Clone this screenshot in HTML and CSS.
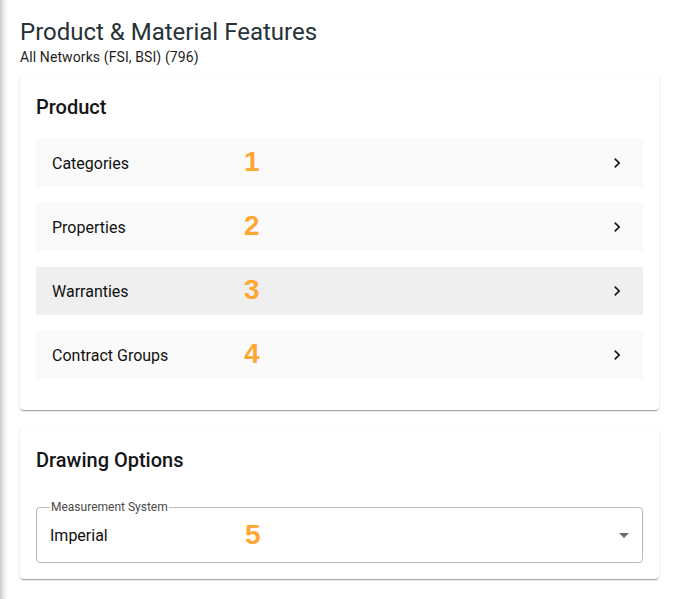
FILE: index.html
```html
<!DOCTYPE html>
<html lang="en">
<head>
<meta charset="utf-8">
<title>Product &amp; Material Features</title>
<link rel="stylesheet" href="styles.css">
</head>
<body>
<main class="page">
  <header class="page-head">
    <h1 class="page-title">Product &amp; Material Features</h1>
    <div class="page-sub">All Networks (FSI, BSI) (796)</div>
  </header>

  <section class="card">
    <h2 class="card-title">Product</h2>
    <ul class="list">
      <li class="row"><span class="row-label">Categories</span><span class="mark">1</span>
        <svg class="chev" viewBox="0 0 24 24"><path d="M10 6 8.59 7.41 13.17 12l-4.58 4.59L10 18l6-6z"/></svg></li>
      <li class="row"><span class="row-label">Properties</span><span class="mark">2</span>
        <svg class="chev" viewBox="0 0 24 24"><path d="M10 6 8.59 7.41 13.17 12l-4.58 4.59L10 18l6-6z"/></svg></li>
      <li class="row row-hover"><span class="row-label">Warranties</span><span class="mark">3</span>
        <svg class="chev" viewBox="0 0 24 24"><path d="M10 6 8.59 7.41 13.17 12l-4.58 4.59L10 18l6-6z"/></svg></li>
      <li class="row"><span class="row-label">Contract Groups</span><span class="mark">4</span>
        <svg class="chev" viewBox="0 0 24 24"><path d="M10 6 8.59 7.41 13.17 12l-4.58 4.59L10 18l6-6z"/></svg></li>
    </ul>
  </section>

  <section class="card card-2">
    <h2 class="card-title">Drawing Options</h2>
    <fieldset class="field">
      <legend class="field-label">Measurement System</legend>
      <div class="field-body">
        <span class="field-value">Imperial</span><span class="mark mark-field">5</span>
        <svg class="drop" viewBox="0 0 24 24"><path d="M7 10l5 5 5-5z"/></svg>
      </div>
    </fieldset>
  </section>
</main>
</body>
</html>
```

FILE: styles.css
```css
* { box-sizing: border-box; }
html, body { margin: 0; padding: 0; }
body {
  font-family: Roboto, "Liberation Sans", Arial, sans-serif;
  color: #111;
  background: linear-gradient(to right, #c9c9c9 0, #e6e6e6 3px, #f8f8f8 6px, #ffffff 8px) no-repeat;
  background-color: #fff;
  min-height: 599px;
}
.page {
  padding: 18px 14px 20px 20px;
}
.page-head { margin-bottom: 9px; }
.page-title {
  margin: 0;
  font-size: 24px;
  font-weight: 400;
  line-height: 28px;
  color: #263238;
}
.page-sub {
  font-size: 14px;
  line-height: 18px;
  margin-top: 2px;
  letter-spacing: 0.1px;
  color: #1e1e1e;
}
.card {
  background: #fff;
  border-radius: 4px;
  box-shadow: 0 2px 1px -1px rgba(0,0,0,.2), 0 1px 1px 0 rgba(0,0,0,.14), 0 1px 3px 0 rgba(0,0,0,.12);
  padding: 16px 16px 31px;
}
.card-2 {
  margin-top: 18px;
  padding-bottom: 16px;
}
.card-title {
  margin: 0 0 16px;
  font-size: 20px;
  font-weight: 500;
  line-height: 32px;
  color: #151515;
}
.list {
  list-style: none;
  margin: 0;
  padding: 0;
  display: flex;
  flex-direction: column;
  gap: 16px;
}
.row {
  position: relative;
  height: 48px;
  display: flex;
  align-items: center;
  padding: 0 16px;
  background: #fafafa;
  font-size: 16px;
  color: #111;
}
.row-hover { background: #efefef; }
.row-label { flex: 1; }
.chev {
  width: 20px;
  height: 20px;
  fill: #1a1a1a;
}
.mark {
  position: absolute;
  left: 208px;
  top: calc(50% - 1px);
  transform: translateY(-50%);
  font-family: "Liberation Sans", Arial, sans-serif;
  font-weight: 700;
  font-size: 28px;
  line-height: 1;
  color: #ffa733;
}
.field {
  margin: 25px 0 0;
  padding: 0 12px 0 13px;
  border: 1px solid rgba(0,0,0,.28);
  border-radius: 4px;
  min-width: 0;
}
.field-label {
  padding: 0 1px;
  font-size: 12px;
  line-height: 12px;
  color: #4a4a4a;
}
.field-body {
  position: relative;
  height: 49px;
  display: flex;
  align-items: center;
  padding-bottom: 5px;
}
.field-value { flex: 1; font-size: 16px; color: #111; }
.mark-field { left: 195px; top: calc(50% - 3px); }
.drop {
  width: 24px;
  height: 24px;
  fill: #6b6b6b;
  margin-right: -6px;
}
```
